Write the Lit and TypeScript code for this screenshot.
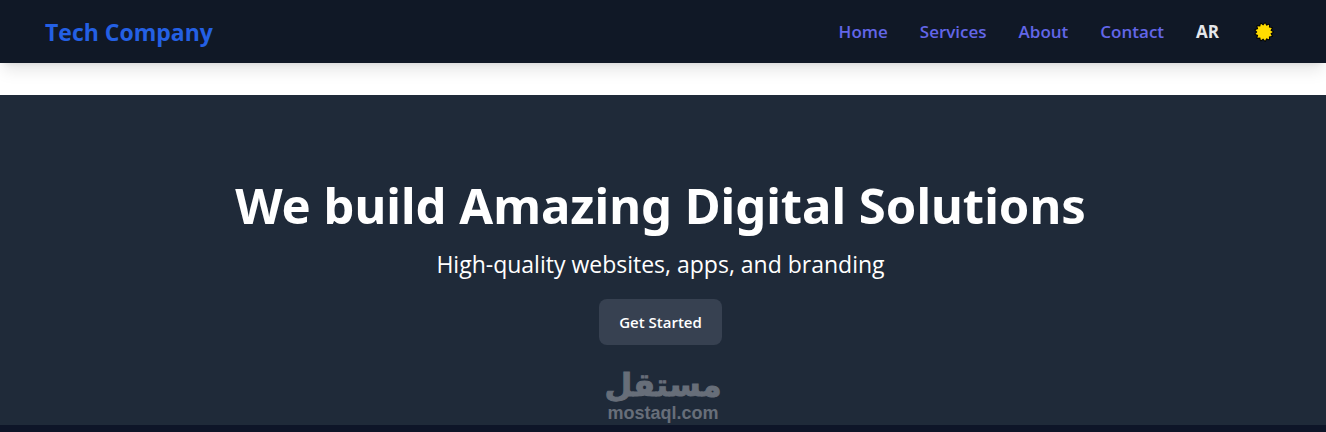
import { LitElement, html, css, svg } from "lit";
import { customElement } from "lit/decorators.js";

const NAV = ["Home", "Services", "About", "Contact"];

/* Alternating outer/inner vertices of the sun's rays. */
const rays = (outer: number, inner: number, count: number) =>
  Array.from({ length: count * 2 }, (_, i) => {
    const r = i % 2 ? inner : outer;
    const a = (i * Math.PI) / count;
    return `${(10 + r * Math.cos(a)).toFixed(2)},${(10 + r * Math.sin(a)).toFixed(2)}`;
  }).join(" ");

@customElement("site-header")
class SiteHeader extends LitElement {
  static styles = css`
    :host {
      display: block;
      background: #101826;
      box-shadow: 0 10px 15px -3px rgba(0, 0, 0, 0.1), 0 4px 6px -4px rgba(0, 0, 0, 0.1);
    }
    .bar {
      display: flex;
      align-items: center;
      justify-content: space-between;
      min-height: 63px;
      box-sizing: border-box;
      padding: 0 51px 0 45px;
    }
    .brand {
      font-size: 23px;
      line-height: 32px;
      font-weight: 700;
      color: #2460e4;
      text-decoration: none;
    }
    .nav {
      display: flex;
      align-items: center;
      gap: 32px;
    }
    .link,
    .lang {
      font: inherit;
      font-size: 17px;
      line-height: 24px;
      font-weight: 600;
      color: #6366e8;
      text-decoration: none;
    }
    .lang,
    .theme {
      border: 0;
      background: none;
      padding: 0;
      cursor: pointer;
    }
    .lang {
      color: #e5e7eb;
      font-weight: 700;
    }
    .theme {
      display: flex;
      padding-left: 2px;
    }
    .sun {
      width: 22px;
      height: 22px;
    }
  `;
  render() {
    return html`<header class="bar">
      <a class="brand" href="#">Tech Company</a>
      <nav class="nav">
        ${NAV.map((n) => html`<a class="link" href="#${n.toLowerCase()}">${n}</a>`)}
        <button class="lang" type="button">AR</button>
        <button class="theme" type="button" aria-label="Toggle theme">
          <svg class="sun" viewBox="0 0 20 20" aria-hidden="true">
            ${svg`<polygon points=${rays(8, 6, 13)} fill="#ffdc00" stroke="#000" stroke-width="1.8" stroke-linejoin="round" paint-order="stroke"/>`}
          </svg>
        </button>
      </nav>
    </header>`;
  }
}

@customElement("hero-section")
class HeroSection extends LitElement {
  static styles = css`
    :host {
      display: block;
      background: #1f2a39;
      color: #fff;
      position: relative;
    }
    .hero {
      display: flex;
      flex-direction: column;
      align-items: center;
      text-align: center;
      padding: 80px 5px 80px 0;
    }
    .title {
      margin: 0;
      font-family: "Noto Sans", sans-serif;
      font-size: 49px;
      line-height: 60px;
      font-weight: 700;
    }
    .lead {
      margin: 11px 0 17px;
      font-size: 23px;
      line-height: 36px;
    }
    .cta {
      border: 0;
      border-radius: 8px;
      background: #374151;
      color: #fff;
      font: inherit;
      font-size: 15px;
      line-height: 22px;
      font-weight: 600;
      padding: 12px 20px;
      cursor: pointer;
    }
    .mark {
      position: absolute;
      left: 50%;
      bottom: 2px;
      transform: translateX(-50%);
      display: flex;
      flex-direction: column;
      align-items: center;
      color: #676e79;
    }
    .mark-ar {
      font: 700 32px/36px "DejaVu Sans", sans-serif;
      -webkit-text-stroke: 1px #676e79;
    }
    .mark-en {
      font: 700 18px/20px "Liberation Sans", Arial, sans-serif;
    }
  `;
  render() {
    return html`<section class="hero">
        <h1 class="title">We build Amazing Digital Solutions</h1>
        <p class="lead">High-quality websites, apps, and branding</p>
        <button class="cta" type="button">Get Started</button>
      </section>
      <div class="mark">
        <span class="mark-ar" lang="ar" dir="rtl">مستقل</span>
        <span class="mark-en">mostaql.com</span>
      </div>`;
  }
}

@customElement("app-root")
class AppRoot extends LitElement {
  static styles = css`
    :host {
      display: flex;
      flex-direction: column;
      gap: 32px;
      min-height: 100vh;
      background: #fff;
      font-family: "Segoe UI", "Open Sans", "Noto Sans", sans-serif;
    }
    .page {
      display: flex;
      flex-direction: column;
      flex: 1;
    }
    .next {
      flex: 1;
      background: #0e1528;
    }
  `;
  render() {
    return html`<site-header></site-header>
      <main class="page">
        <hero-section></hero-section>
        <div class="next"></div>
      </main>`;
  }
}
